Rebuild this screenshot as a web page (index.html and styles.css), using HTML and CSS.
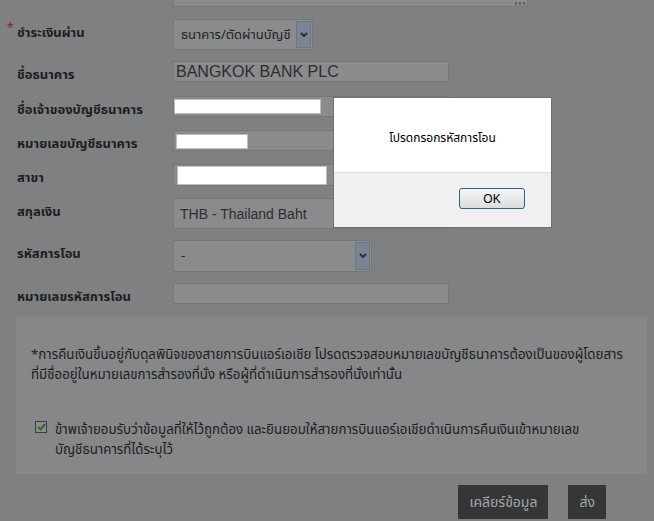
FILE: index.html
```html
<!DOCTYPE html>
<html lang="th">
<head>
    <meta charset="UTF-8">
    <meta name="viewport" content="width=device-width, initial-scale=1.0">
    <title>ขอคืนเงิน</title>
    <link rel="stylesheet" href="styles.css">
</head>
<body>
    <div class="page">
        <div class="remark"><span class="grip"></span></div>

        <form class="refund-form" id="refundForm">
            <div class="row row-tall">
                <label class="lbl"><span class="req">*</span>ชำระเงินผ่าน</label>
                <div class="select sel-pay">
                    <span class="val">ธนาคาร/ตัดผ่านบัญชี</span>
                    <span class="arrow"><svg width="8" height="6" viewBox="0 0 8 6"><polyline points="1,1 4,4 7,1" fill="none" stroke="#2c313c" stroke-width="2"/></svg></span>
                </div>
            </div>
            <div class="row row-35">
                <label class="lbl">ชื่อธนาคาร</label>
                <div class="field wide">BANGKOK BANK PLC</div>
            </div>
            <div class="row">
                <label class="lbl">ชื่อเจ้าของบัญชีธนาคาร</label>
                <div class="field wide"><span class="live live-owner"></span></div>
            </div>
            <div class="row">
                <label class="lbl">หมายเลขบัญชีธนาคาร</label>
                <div class="field wide"><span class="live live-acct"></span></div>
            </div>
            <div class="row">
                <label class="lbl">สาขา</label>
                <div class="field wide field-22"><span class="live live-branch"></span></div>
            </div>
            <div class="row row-tall">
                <label class="lbl">สกุลเงิน</label>
                <div class="field wide field-tall">THB - Thailand Baht</div>
            </div>
            <div class="row row-43">
                <label class="lbl">รหัสการโอน</label>
                <div class="select sel-code">
                    <span class="val">-</span>
                    <span class="arrow"><svg width="8" height="6" viewBox="0 0 8 6"><polyline points="1,1 4,4 7,1" fill="none" stroke="#2c313c" stroke-width="2"/></svg></span>
                </div>
            </div>
            <div class="row">
                <label class="lbl">หมายเลขรหัสการโอน</label>
                <div class="field wide"></div>
            </div>
        </form>

        <div class="notice">
            <p class="note">*การคืนเงินขึ้นอยู่กับดุลพินิจของสายการบินแอร์เอเชีย โปรดตรวจสอบหมายเลขบัญชีธนาคารต้องเป็นของผู้โดยสาร<br>ที่มีชื่ออยู่ในหมายเลขการสำรองที่นั่ง หรือผู้ที่ดำเนินการสำรองที่นั่งเท่านั้น</p>
            <div class="agree">
                <span class="check"><svg width="9" height="8" viewBox="0 0 9 8"><polyline points="1,4 3.5,6.5 8,1" fill="none" stroke="#2f6a2a" stroke-width="2"/></svg></span>
                <p>ข้าพเจ้ายอมรับว่าข้อมูลที่ให้ไว้ถูกต้อง และยินยอมให้สายการบินแอร์เอเชียดำเนินการคืนเงินเข้าหมายเลข<br>บัญชีธนาคารที่ได้ระบุไว้</p>
            </div>
        </div>

        <div class="actions">
            <button type="button" class="btn">เคลียร์ข้อมูล</button>
            <button type="button" class="btn">ส่ง</button>
        </div>
    </div>

    <div class="dialog">
        <div class="dialog-body">โปรดกรอกรหัสการโอน</div>
        <div class="dialog-foot">
            <button type="button" class="ok">OK</button>
        </div>
    </div>
</body>
</html>
```

FILE: styles.css
```css
html, body {
    margin: 0;
    height: 100%;
    overflow: hidden;
}
body {
    background-color: #7f8081;
    font-family: Tahoma, "Noto Sans Thai", "Noto Sans", "DejaVu Sans", sans-serif;
    font-size: 13px;
    color: #1d1d1d;
}
.page {
    position: relative;
}
.remark {
    margin: -24px 0 12px 173px;
    width: 353px;
    height: 29px;
    background-color: #8a8b8c;
    border: 1px solid #767778;
    position: relative;
}
.grip {
    position: absolute;
    right: 2px;
    bottom: 1px;
    width: 11px;
    height: 3px;
    background: radial-gradient(circle, #5f6061 1.2px, transparent 1.4px) 0 0 / 4px 3px repeat-x;
}
.refund-form {
    padding-left: 17px;
}
.row {
    display: flex;
    align-items: flex-start;
    height: 34px;
}
.row-35 { height: 35px; }
.row-tall { height: 42px; }
.row-43 { height: 43px; }
.lbl {
    width: 156px;
    flex-shrink: 0;
    font-weight: bold;
    line-height: 16px;
    padding-top: 6px;
    position: relative;
}
.req {
    position: absolute;
    left: -10px;
    top: 1px;
    color: #7a2a24;
    font-weight: normal;
    font-size: 12px;
}
.field {
    box-sizing: border-box;
    height: 21px;
    background-color: #8a8b8c;
    border: 1px solid #767778;
    padding: 1px 2px;
    font-family: "Liberation Sans", Arial, sans-serif;
    font-size: 16px;
    line-height: 18px;
    color: #2e2e2e;
}
.wide { width: 276px; }
.field-22 { height: 22px; }
.field-tall {
    height: 31px;
    padding: 6px 6px;
    font-size: 14px;
}
.live {
    display: block;
    background-color: #fff;
    border: 1px solid #bdbdbd;
    box-sizing: border-box;
}
.live-owner { width: 147px; height: 15px; margin: 1px 0 0 -2px; }
.live-acct { width: 72px; height: 15px; margin: 2px 0 0 0; }
.live-branch { width: 150px; height: 19px; margin: 0 0 0 1px; }
.select {
    box-sizing: border-box;
    display: flex;
    align-items: center;
    background-color: #8a8b8c;
    border: 1px solid #767778;
    padding: 1px;
}
.sel-pay { width: 140px; height: 31px; }
.sel-code { width: 199px; height: 32px; }
.select .val {
    flex: 1;
    padding-left: 6px;
    font-size: 13px;
    color: #232323;
}
.arrow {
    box-sizing: border-box;
    width: 15px;
    height: 100%;
    display: flex;
    align-items: center;
    justify-content: center;
    background-color: #7b8394;
    border: 1px solid #6d7586;
}
.notice {
    margin-left: 16px;
    width: 631px;
    height: 157px;
    box-sizing: border-box;
    background-color: #868788;
    padding: 28px 15px 0;
    font-size: 13.3px;
}
.notice p {
    margin: 0;
    line-height: 20px;
}
.agree {
    display: flex;
    align-items: flex-start;
    margin-top: 35px;
    padding-left: 4px;
}
.check {
    box-sizing: border-box;
    width: 12px;
    height: 12px;
    margin-top: 1px;
    margin-right: 8px;
    border: 1px solid #34404c;
    background-color: #8d8e8f;
    display: flex;
    align-items: center;
    justify-content: center;
}
.actions {
    display: flex;
    justify-content: flex-end;
    gap: 20px;
    margin: 11px 48px 0 0;
}
.btn {
    height: 34px;
    padding: 0 11px;
    border: none;
    background-color: #353638;
    color: #a6a6a6;
    font-family: inherit;
    font-size: 14px;
}
.dialog {
    position: absolute;
    left: 333px;
    top: 97px;
    width: 219px;
    height: 131px;
    box-sizing: border-box;
    border: 1px solid #6f7070;
    background-color: #fff;
    display: flex;
    flex-direction: column;
}
.dialog-body {
    height: 74px;
    box-sizing: border-box;
    padding-top: 31px;
    text-align: center;
    font-size: 12px;
    color: #000;
}
.dialog-foot {
    flex: 1;
    background-color: #f0f0f0;
    border-top: 1px solid #dfdfdf;
    display: flex;
    justify-content: flex-end;
    align-items: flex-start;
    padding: 15px 26px 0 0;
}
.ok {
    width: 66px;
    height: 21px;
    border: 1px solid #2f5f8c;
    border-radius: 3px;
    background: linear-gradient(#f6f6f6, #dcdcdc);
    font-family: "Liberation Sans", Arial, sans-serif;
    font-size: 12px;
    color: #000;
    padding: 0;
}
```
